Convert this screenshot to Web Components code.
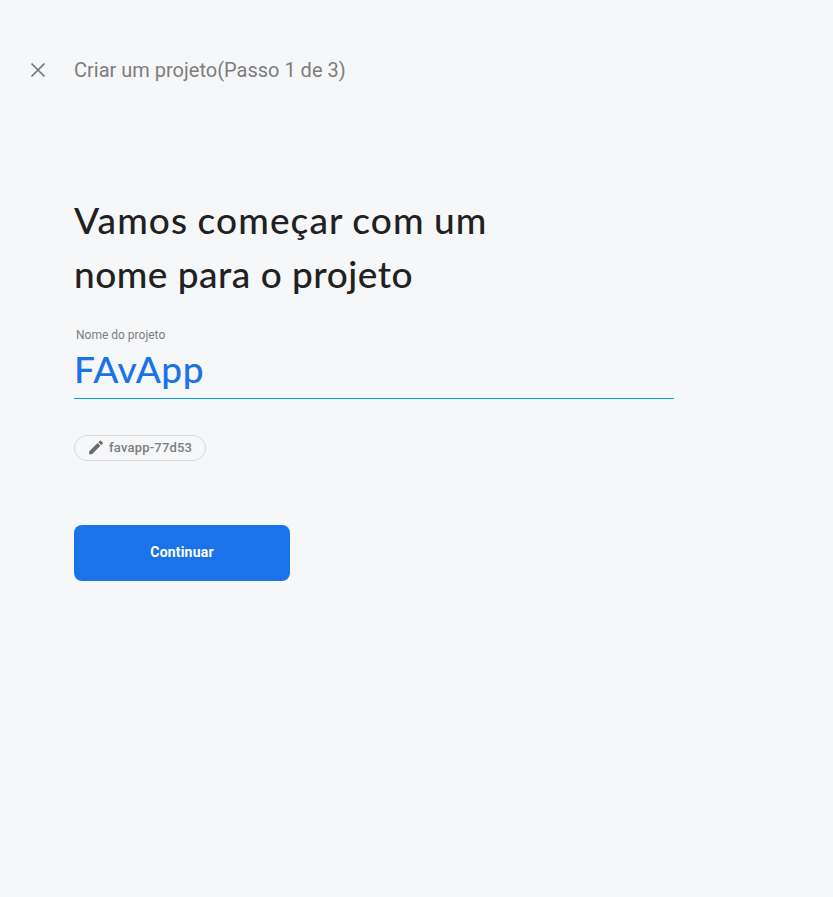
<!DOCTYPE html>
<html lang="pt-BR">
<head>
<meta charset="utf-8">
<title>Criar um projeto</title>
<style>
  html, body { margin: 0; height: 100%; background: #f6f7f9; }
  body { font-family: Roboto, "Liberation Sans", sans-serif; --display: Lato, "Open Sans", sans-serif; --blue: #1a73e8; --muted: #757677; }
</style>
</head>
<body>
<project-wizard></project-wizard>
<script>
const define = (name, markup) => customElements.define(name, class extends HTMLElement {
  constructor() {
    super();
    const t = document.createElement('template');
    t.innerHTML = markup;
    this.attachShadow({ mode: 'open' }).append(t.content.cloneNode(true));
  }
});

define('wizard-header', `
  <style>
    :host { display: flex; align-items: center; gap: 26px; height: 28px; padding-left: 28px; color: var(--muted); }
    button { display: flex; padding: 0; border: 0; background: none; color: inherit; }
    .title { font-size: 20px; line-height: 28px; font-weight: 400; color: #7c7d7e; white-space: nowrap; }
  </style>
  <button aria-label="Fechar"><svg width="20" height="20" viewBox="0 0 20 20" fill="none" stroke="currentColor" stroke-width="1.7"><path d="M3.5 3.5 16.5 16.5M16.5 3.5 3.5 16.5"/></svg></button>
  <div class="title"><slot></slot></div>`);

define('step-title', `
  <style>
    :host { display: block; font-family: var(--display); font-size: 37px; line-height: 54px; color: #212121; font-weight: 500; white-space: nowrap; }
    h1 { margin: 0; font: inherit; }
  </style>
  <h1><slot></slot></h1>`);

define('name-field', `
  <style>
    :host { display: block; width: 600px; height: 73px; box-sizing: border-box; border-bottom: 1px solid #039be5; }
    .label { padding-left: 2px; font-size: 12px; line-height: 18px; color: #7c7d7e; }
    .value { font-family: var(--display); font-size: 37px; line-height: 48px; font-weight: 500; color: var(--blue); letter-spacing: .5px; padding-top: 1px; }
  </style>
  <div class="label"><slot name="label"></slot></div>
  <div class="value"><slot></slot></div>`);

define('id-chip', `
  <style>
    :host { display: flex; align-items: center; gap: 5px; width: 132px; height: 26px; box-sizing: border-box; padding-left: 13px; border: 1px solid #d5d7d9; border-radius: 13px; color: #7c7d7e; font-size: 13px; line-height: 24px; font-weight: 500; letter-spacing: .2px; white-space: nowrap; }
    svg { flex: none; }
    span { margin-top: -1px; }
  </style>
  <svg width="16" height="18" viewBox="1.5 1 21 23.5" fill="#6a6a6a"><path d="M3 17.25V21h3.75L17.81 9.94l-3.75-3.75L3 17.25zM20.71 7.04a1 1 0 0 0 0-1.41l-2.34-2.34a1 1 0 0 0-1.41 0l-1.83 1.83 3.75 3.75 1.83-1.83z"/></svg>
  <span><slot></slot></span>`);

define('primary-button', `
  <style>
    :host { display: block; width: 216px; height: 56px; }
    button { width: 100%; height: 100%; padding: 0 0 2px; border: 0; border-radius: 8px; background: var(--blue); color: #fff; font: 700 14px/20px Roboto, sans-serif; letter-spacing: .2px; }
  </style>
  <button><slot></slot></button>`);

define('project-wizard', `
  <style>
    :host { display: block; padding-top: 56px; }
    main { display: flex; flex-direction: column; align-items: flex-start; padding: 109px 0 0 74px; }
    name-field { margin-top: 25px; }
    id-chip { margin-top: 36px; }
    primary-button { margin-top: 64px; }
    .l1, .l2, .v { display: block; }
    .l1 { letter-spacing: 1.1px; word-spacing: -1px; }
    .l2 { letter-spacing: .5px; }
  </style>
  <wizard-header>Criar um projeto(Passo 1 de 3)</wizard-header>
  <main>
    <step-title><span class="l1">Vamos começar com um</span><span class="l2">nome para o projeto</span></step-title>
    <name-field><span slot="label">Nome do projeto</span><span class="v">FAvApp</span></name-field>
    <id-chip>favapp-77d53</id-chip>
    <primary-button>Continuar</primary-button>
  </main>`);
</script>
</body>
</html>
